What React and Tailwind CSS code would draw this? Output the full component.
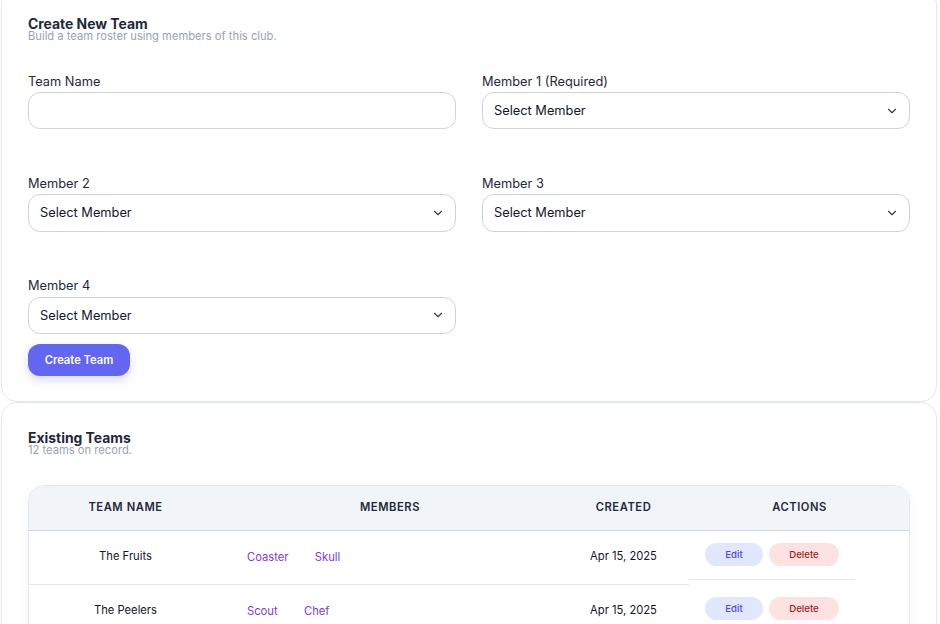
import { ChevronDown } from "lucide-react";

const teams = [
  { name: "The Fruits", members: ["Coaster", "Skull"], created: "Apr 15, 2025" },
  { name: "The Peelers", members: ["Scout", "Chef"], created: "Apr 15, 2025" },
];

function MemberSelect({ label }) {
  return (
    <div>
      <label className="block text-[12.8px] leading-[20px] pt-[0.3px] mb-[0.4px] text-[#1e293b]">{label}</label>
      <div className="relative">
        <select className="w-full h-[37.3px] appearance-none rounded-[12px] border border-[#cbd5e1] bg-white px-[11px] text-[12.8px] text-[#0f172a] outline-none">
          <option>Select Member</option>
        </select>
        <ChevronDown
          size={14}
          strokeWidth={2}
          className="absolute right-[11.5px] top-[11.7px] text-[#334155] pointer-events-none"
        />
      </div>
    </div>
  );
}

export default function App() {
  return (
    <div
      className="h-[624px] overflow-hidden bg-white pl-[1px] pr-[3px]"
      style={{ fontFamily: "Inter, sans-serif" }}
    >
      {/* create form */}
      <div className="mt-[-12px] h-[414px] rounded-[16px] border border-[#e2e8f0] bg-white px-[26px] pt-[28px]">
        <h2 className="text-[13.9px] leading-[14px] font-bold text-[#1e293b]">Create New Team</h2>
        <p className="text-[11.2px] leading-[10px] text-[#94a3b8]">Build a team roster using members of this club.</p>

        <div className="mt-[30.3px] grid grid-cols-2 gap-x-[26px] gap-y-[44.4px]">
          <div>
            <label className="block text-[12.8px] leading-[20px] pt-[0.3px] mb-[0.4px] text-[#1e293b]">Team Name</label>
            <input className="block w-full h-[37.3px] rounded-[12px] border border-[#cbd5e1] bg-white px-[11px] text-[12.8px] outline-none" />
          </div>
          <MemberSelect label="Member 1 (Required)" />
          <MemberSelect label="Member 2" />
          <MemberSelect label="Member 3" />
          <MemberSelect label="Member 4" />
        </div>

        <button className="mt-[10px] h-[32px] w-[102px] rounded-[12px] bg-[#6366f1] text-[11.2px] font-semibold text-white shadow-[0_4px_10px_rgba(99,102,241,0.25)]">
          Create Team
        </button>
      </div>

      {/* teams list */}
      <div className="h-[300px] rounded-[16px] border border-[#e2e8f0] bg-white px-[26px] pt-[28px]">
        <h2 className="text-[13.9px] leading-[14px] font-bold text-[#1e293b]">Existing Teams</h2>
        <p className="text-[11.2px] leading-[10px] text-[#94a3b8]">12 teams on record.</p>

        <div className="mt-[30px] overflow-hidden rounded-[16px] border border-[#e2e8f0] shadow-[0_4px_16px_rgba(15,23,42,0.04)]">
          <table className="w-full table-fixed border-separate border-spacing-0 text-[11.2px] text-[#0f172a]">
            <colgroup>
              <col className="w-[193px]" />
              <col className="w-[336px]" />
              <col className="w-[131px]" />
              <col className="w-[221px]" />
            </colgroup>
            <thead>
              <tr className="bg-[#f1f5f9]">
                <th className="h-[45px] border-b border-[#cbd5e1] pb-[1px] text-[11.2px] font-semibold tracking-[0.05em] text-[#1e293b]">TEAM NAME</th>
                <th className="h-[45px] border-b border-[#cbd5e1] pb-[1px] text-[11.2px] font-semibold tracking-[0.05em] text-[#1e293b]">MEMBERS</th>
                <th className="h-[45px] border-b border-[#cbd5e1] pb-[1px] text-[11.2px] font-semibold tracking-[0.05em] text-[#1e293b]">CREATED</th>
                <th className="h-[45px] border-b border-[#cbd5e1] pb-[1px] text-[11.2px] font-semibold tracking-[0.05em] text-[#1e293b]">ACTIONS</th>
              </tr>
            </thead>
            <tbody>
              {teams.map((team) => (
                <tr key={team.name}>
                  <td className="h-[54px] border-b border-[#e2e8f0] pb-[2px] text-center">{team.name}</td>
                  <td className="h-[54px] border-b border-[#e2e8f0] pl-[25px]">
                    <div className="flex gap-[26.4px] text-[#7c3aed]">
                      {team.members.map((m) => (
                        <span key={m}>{m}</span>
                      ))}
                    </div>
                  </td>
                  <td className="h-[54px] border-b border-[#e2e8f0] pb-[2px] text-center">{team.created}</td>
                  <td className="h-[54px] align-top">
                    <div className="flex w-[166px] gap-[6px] border-b border-[#e2e8f0] px-[16px] pt-[12px] pb-[13px]">
                      <button className="h-[23px] w-[58px] rounded-full bg-[#e0e7ff] pt-[1px] text-[9.6px] font-medium text-[#4f46e5]">Edit</button>
                      <button className="h-[23px] w-[70px] rounded-full bg-[#fee2e2] pt-[1px] text-[9.6px] font-medium text-[#991b1b]">Delete</button>
                    </div>
                  </td>
                </tr>
              ))}
            </tbody>
          </table>
        </div>
      </div>
    </div>
  );
}
